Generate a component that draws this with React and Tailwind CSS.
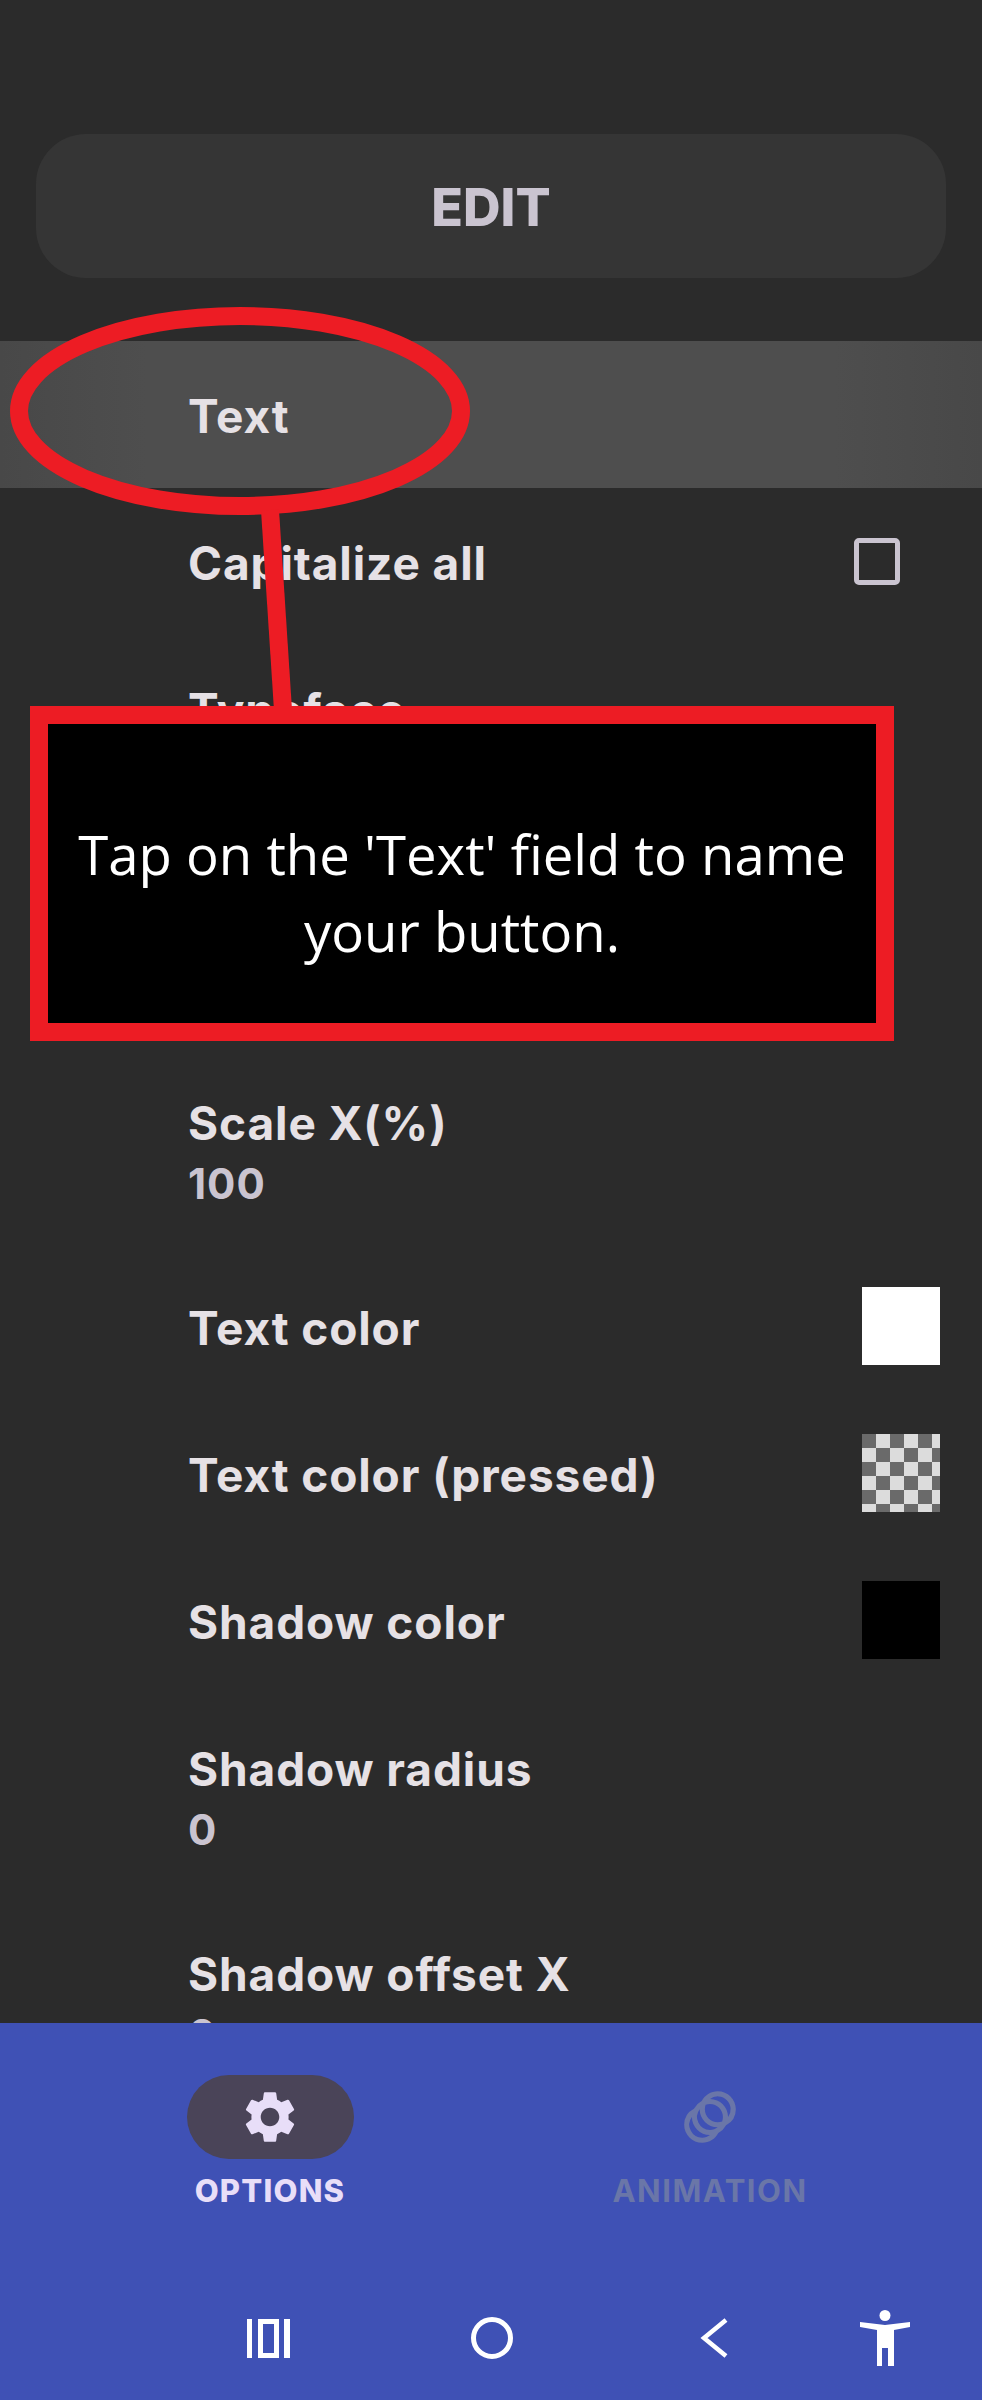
import { MdSettings, MdAnimation } from "react-icons/md";

const labelFont = "font-['Inter','Liberation_Sans',sans-serif]";

function Label({ children }) {
  return <div className="pt-[2px] text-[46px] leading-[56px] font-bold tracking-[0.9px] text-[#e6e1e5]">{children}</div>;
}

function Value({ children }) {
  return <div className="mt-[5px] text-[42px] leading-[56px] font-bold tracking-[1px] text-[#cac4d0]">{children}</div>;
}

function Row({ children, right, active }) {
  return (
    <div
      className={`flex h-[147px] items-center justify-between pl-[188px] pr-[42px] ${
        active ? "bg-[linear-gradient(90deg,#484848,#4e4e4e_15%,#4e4e4e_85%,#484848)]" : ""
      }`}
    >
      <Label>{children}</Label>
      {right}
    </div>
  );
}

function ValueRow({ label, value, className = "h-[205px]" }) {
  return (
    <div className={`pl-[188px] pt-[45px] ${className}`}>
      <Label>{label}</Label>
      {value ? <Value>{value}</Value> : null}
    </div>
  );
}

function Swatch({ className }) {
  return <div className={`mb-[2px] h-[78px] w-[78px] ${className}`} />;
}

// red callout that was painted over the screenshot
function Callout() {
  return (
    <div className="absolute inset-0">
      <svg className="absolute left-0 top-0" width="982" height="720" viewBox="0 0 982 720" fill="none">
        <ellipse cx="240" cy="411" rx="221" ry="95" stroke="#ed1c24" strokeWidth="18" />
        <path d="M270 510 L283 710" stroke="#ed1c24" strokeWidth="18" />
      </svg>
      <div className="absolute left-[30px] top-[706px] flex h-[335px] w-[864px] items-center justify-center border-[18px] border-[#ed1c24] bg-black px-[20px]">
        <p className="pt-[39px] text-center font-['Open_Sans',sans-serif] text-[54.5px] leading-[77px] font-normal text-white">
          Tap on the 'Text' field to name your button.
        </p>
      </div>
    </div>
  );
}

function NavBar() {
  return (
    <div className="flex h-[187px] items-center pl-[247px] pt-[63px]">
      <svg width="43" height="39" viewBox="0 0 43 39" fill="#fff">
        <rect x="0" y="0" width="5" height="39" />
        <rect x="37" y="0" width="6" height="39" />
        <path fillRule="evenodd" d="M11 0h21v39H11zM16 5v29h11V5z" />
      </svg>
      <svg width="44" height="44" viewBox="0 0 44 44" fill="none" className="ml-[180px]">
        <circle cx="22" cy="22" r="18.5" stroke="#fff" strokeWidth="5" />
      </svg>
      <svg width="28" height="40" viewBox="0 0 28 40" fill="none" className="ml-[186px]">
        <path d="M26 2 L4 20 L26 38" stroke="#fff" strokeWidth="4.5" />
      </svg>
      <svg width="50" height="56" viewBox="0 0 50 56" fill="#fff" className="ml-[132px]">
        <circle cx="25" cy="5.5" r="5.5" />
        <path d="M0 12 L25 15 L50 12 L50 17 L34 20 L34 56 L28 56 L28 38 L22 38 L22 56 L17 56 L17 20 L0 17 Z" />
      </svg>
    </div>
  );
}

export default function App() {
  return (
    <div className={`relative flex h-[2400px] w-[982px] flex-col overflow-hidden bg-[#2b2b2b] ${labelFont}`}>
      <div className="min-h-0 flex-1 overflow-hidden">
        <div className="px-[36px] pt-[134px]">
          <div className="flex h-[144px] items-center justify-center rounded-[50px] bg-[#353535] pt-[4px] text-[52px] font-extrabold text-[#cac4d0]">
            EDIT
          </div>
        </div>
        <div className="mt-[63px]">
          <Row active>Text</Row>
          <Row
            right={<div className="mr-[40px] h-[47px] w-[46px] rounded-[5px] border-[5px] border-[#cac4d0]" />}
          >
            Capitalize all
          </Row>
          <ValueRow label="Typeface" className="h-[207px]" />
          <ValueRow label="Text size" className="h-[206px]" />
          <ValueRow label="Scale X(%)" value="100" />
          <Row right={<Swatch className="bg-white" />}>Text color</Row>
          <Row
            right={
              <Swatch className="bg-[conic-gradient(#dcdcdc_25%,#6a6a6a_0_50%,#dcdcdc_0_75%,#6a6a6a_0)] bg-[length:28px_28px]" />
            }
          >
            Text color (pressed)
          </Row>
          <Row right={<Swatch className="bg-black" />}>Shadow color</Row>
          <ValueRow label="Shadow radius" value="0" />
          <ValueRow label="Shadow offset X" value="0" />
        </div>
      </div>

      <div className="shrink-0 bg-[#3f51b5]">
        <div className="flex pl-[50px] pr-[52px] pt-[52px]">
          <div className="flex w-[440px] flex-col items-center">
            <div className="flex h-[84px] w-[167px] items-center justify-center rounded-full bg-[#4a4458]">
              <MdSettings className="text-[62px] text-[#e8def8]" />
            </div>
            <div className="mt-[10px] text-[31px] leading-[44px] font-extrabold tracking-[1.2px] text-[#e8def8]">OPTIONS</div>
          </div>
          <div className="flex w-[440px] flex-col items-center">
            <div className="flex h-[84px] items-center justify-center">
              <MdAnimation className="text-[62px] text-[#6a76a8]" />
            </div>
            <div className="mt-[10px] text-[31px] leading-[44px] font-bold tracking-[1.5px] text-[#6a76a8]">ANIMATION</div>
          </div>
        </div>
        <NavBar />
      </div>

      <Callout />
    </div>
  );
}
